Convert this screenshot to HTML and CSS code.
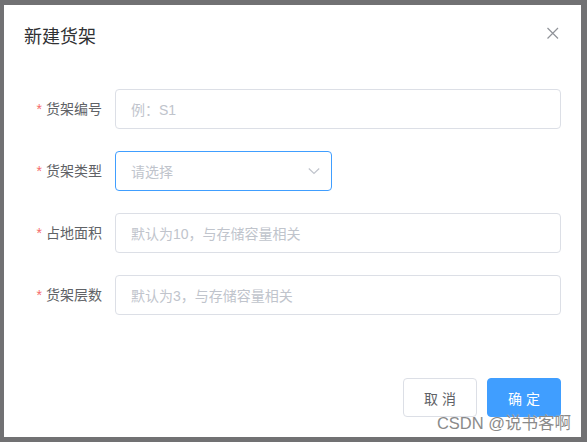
FILE: index.html
```html
<!DOCTYPE html>
<html lang="zh">
<head>
<meta charset="utf-8">
<link rel="stylesheet" href="styles.css">
</head>
<body>
<div class="dialog">
  <div class="dialog-header">
    <span class="dialog-title">新建货架</span>
    <span class="dialog-close">
      <svg width="16" height="16" viewBox="0 0 16 16"><path d="M2.5 3 L13 13.5 M13 3 L2.5 13.5" stroke="#909399" stroke-width="1.2" fill="none"/></svg>
    </span>
  </div>
  <div class="dialog-body">
    <div class="form-item">
      <label class="form-label"><span class="req">*</span>货架编号</label>
      <div class="form-content"><div class="input"><span class="placeholder">例：S1</span></div></div>
    </div>
    <div class="form-item">
      <label class="form-label"><span class="req">*</span>货架类型</label>
      <div class="form-content">
        <div class="input select is-focus">
          <span class="placeholder">请选择</span>
          <svg class="arrow" width="12" height="8" viewBox="0 0 12 8"><path d="M0.8 1.5 L6 6.5 L11.2 1.5" stroke="#c0c4cc" stroke-width="1.2" fill="none"/></svg>
        </div>
      </div>
    </div>
    <div class="form-item">
      <label class="form-label"><span class="req">*</span>占地面积</label>
      <div class="form-content"><div class="input"><span class="placeholder">默认为10，与存储容量相关</span></div></div>
    </div>
    <div class="form-item">
      <label class="form-label"><span class="req">*</span>货架层数</label>
      <div class="form-content"><div class="input"><span class="placeholder">默认为3，与存储容量相关</span></div></div>
    </div>
  </div>
  <div class="dialog-footer">
    <button class="btn btn-default">取 消</button>
    <button class="btn btn-primary">确 定</button>
  </div>
</div>
<div class="watermark">CSDN @说书客啊</div>
</body>
</html>
```
FILE: styles.css
```css
html, body {
  margin: 0;
  height: 100%;
}
body {
  background: #717173;
  padding: 5px 6px 0 4px;
  box-sizing: border-box;
  font-family: "Liberation Sans", "Noto Sans CJK SC", sans-serif;
  position: relative;
  overflow: hidden;
}
.dialog {
  background: #fff;
  width: 577px;
  height: 432px;
  box-sizing: border-box;
  display: flex;
  flex-direction: column;
}
.dialog-header {
  padding: 20px 20px 10px;
  display: flex;
  justify-content: space-between;
  align-items: flex-start;
}
.dialog-title {
  font-size: 18px;
  line-height: 24px;
  color: #303133;
}
.dialog-close {
  width: 16px;
  height: 16px;
  display: block;
}
.dialog-close svg { display: block; }
.dialog-body {
  padding: 30px 20px;
}
.form-item {
  display: flex;
  height: 40px;
  margin-bottom: 22px;
}
.form-label {
  width: 91px;
  padding-right: 13px;
  box-sizing: border-box;
  text-align: right;
  font-size: 14px;
  line-height: 40px;
  color: #606266;
  flex: none;
}
.req {
  color: #f56c6c;
  margin-right: 4px;
}
.form-content {
  flex: 1;
}
.input {
  height: 40px;
  box-sizing: border-box;
  border: 1px solid #dcdfe6;
  border-radius: 4px;
  padding: 0 15px;
  display: flex;
  align-items: center;
  font-size: 14px;
}
.placeholder {
  color: #c0c4cc;
}
.select {
  width: 217px;
  justify-content: space-between;
  padding-right: 11px;
}
.select.is-focus {
  border-color: #409eff;
}
.arrow { display: block; }
.dialog-footer {
  padding: 10px 20px 20px;
  display: flex;
  justify-content: flex-end;
  gap: 10px;
  margin-top: auto;
}
.btn {
  height: 39px;
  width: 74px;
  border-radius: 4px;
  font-size: 14px;
  font-family: inherit;
  box-sizing: border-box;
  padding: 0;
}
.btn-default {
  background: #fff;
  border: 1px solid #dcdfe6;
  color: #606266;
}
.btn-primary {
  background: #409eff;
  border: 1px solid #409eff;
  color: #fff;
}
.watermark {
  position: absolute;
  right: 16px;
  bottom: 9px;
  font-size: 16.5px;
  line-height: 19px;
  color: #8a8a8a;
  text-shadow: 0 0 1px rgba(255,255,255,0.6);
}
```
